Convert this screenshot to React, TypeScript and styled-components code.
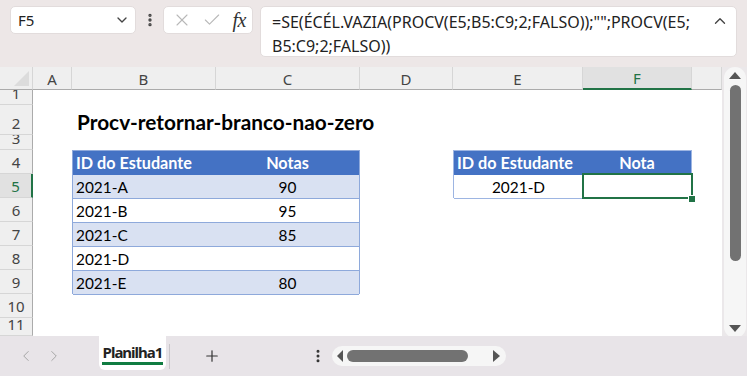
import React from "react";
import styled, { createGlobalStyle } from "styled-components";
import {
  ChevronDown,
  ChevronUp,
  ChevronLeft,
  ChevronRight,
  X,
  Check,
  EllipsisVertical,
  Plus,
} from "lucide-react";

const GREEN = "#217346";
const UI_FONT = `"Noto Sans", "Open Sans", sans-serif`;
const CELL_FONT = `Lato, "Liberation Sans", sans-serif`;

const COLS = [33, 39, 144, 144, 93, 130, 109, 30];
const ROWS = [15, 30, 15, 24, 24, 24, 24, 24, 24, 24, 18];
const COL_NAMES = ["A", "B", "C", "D", "E", "F", "G"];

const GlobalStyle = createGlobalStyle`
  html, body { margin: 0; padding: 0; }
  body { background: #ece7e8; font-family: ${UI_FONT}; }
`;

const Window = styled.div`
  width: 747px;
  height: 376px;
  display: flex;
  flex-direction: column;
  overflow: hidden;
  background: #ece7e8;
`;

const FormulaBar = styled.div`
  height: 67px;
  box-sizing: border-box;
  padding: 6px 0 0 10px;
  display: flex;
  align-items: flex-start;
  background: #ede7e7;
`;

const InputBox = styled.div<{ $w: number; $h?: number }>`
  width: ${({ $w }) => $w}px;
  height: ${({ $h }) => $h ?? 28}px;
  box-sizing: border-box;
  background: #fff;
  border: 1px solid #e2dcdc;
  border-radius: 5px;
  display: flex;
  align-items: center;
`;

const NameText = styled.span`
  flex: 1;
  padding-left: 7px;
  font-size: 15px;
  color: #222;
`;

const BarDots = styled.div`
  width: 27px;
  height: 28px;
  display: flex;
  align-items: center;
  justify-content: center;
  color: #444;
`;

const FxRow = styled.div`
  display: flex;
  align-items: center;
  justify-content: space-between;
  width: 100%;
  padding: 0 6px 0 8px;
  color: #b8b8b8;
`;

const FxLabel = styled.span`
  font-family: "Liberation Serif", serif;
  font-style: italic;
  font-size: 20px;
  color: #333;
  letter-spacing: -0.5px;
`;

const FormulaText = styled.div`
  flex: 1;
  align-self: flex-start;
  padding: 3px 0 0 11px;
  font-size: 16px;
  line-height: 24px;
  color: #222;
  white-space: nowrap;
`;

const CollapseBtn = styled.div`
  align-self: flex-start;
  padding: 5px 7px 0 0;
  color: #444;
`;

const SheetArea = styled.div`
  height: 269px;
  display: flex;
`;

const Grid = styled.div`
  position: relative;
  width: 722px;
  display: grid;
  grid-template-columns: ${COLS.map((c) => `${c}px`).join(" ")};
  grid-template-rows: 23px ${ROWS.map((r) => `${r}px`).join(" ")};
  background: #fff;
  overflow: hidden;
`;

const Corner = styled.div`
  grid-column: 1;
  grid-row: 1;
  position: relative;
  background: #efefef;
  border-right: 1px solid #d6d6d6;
  border-bottom: 1px solid #ababab;
  &::after {
    content: "";
    position: absolute;
    right: 3px;
    bottom: 3px;
    width: 15px;
    height: 15px;
    background: #dcdcdc;
    clip-path: polygon(100% 0, 100% 100%, 0 100%);
  }
`;

const ColHead = styled.div<{ $col: number; $active?: boolean }>`
  grid-column: ${({ $col }) => $col};
  grid-row: 1;
  box-sizing: border-box;
  background: ${({ $active }) => ($active ? "#e1e1e1" : "#efefef")};
  border-right: 1px solid #d6d6d6;
  border-bottom: ${({ $active }) =>
    $active ? `2px solid ${GREEN}` : "1px solid #ababab"};
  color: ${({ $active }) => ($active ? GREEN : "#444")};
  font-size: 15px;
  display: flex;
  align-items: center;
  justify-content: center;
  padding-top: 1px;
`;

const RowHead = styled.div<{ $row: number; $active?: boolean }>`
  grid-column: 1;
  grid-row: ${({ $row }) => $row};
  box-sizing: border-box;
  overflow: hidden;
  background: ${({ $active }) => ($active ? "#e1e1e1" : "#efefef")};
  border-right: ${({ $active }) =>
    $active ? `2px solid ${GREEN}` : "1px solid #ababab"};
  border-bottom: 1px solid #d6d6d6;
  color: ${({ $active }) => ($active ? GREEN : "#444")};
  font-size: 15px;
  line-height: 20px;
  display: flex;
  align-items: flex-end;
  justify-content: center;
  padding-bottom: 1px;
`;

const Title = styled.div`
  grid-column: 3 / 7;
  grid-row: 3;
  align-self: center;
  padding: 3px 0 0 5px;
  font-family: ${CELL_FONT};
  font-weight: 700;
  font-size: 20.8px;
  color: #000;
`;

const Table = styled.div<{ $col: string; $row: string; $line: string; $first: number }>`
  grid-column: ${({ $col }) => $col};
  grid-row: ${({ $row }) => $row};
  display: grid;
  grid-template-columns: ${({ $first }) => $first}px 1fr;
  grid-auto-rows: 24px;
  box-sizing: border-box;
  border: 1px solid ${({ $line }) => $line};
  border-bottom: none;
`;

const TableCell = styled.div<{
  $head?: boolean;
  $band?: boolean;
  $align?: "left" | "center";
  $line: string;
}>`
  box-sizing: border-box;
  padding: 0 3px;
  display: flex;
  align-items: center;
  justify-content: ${({ $align }) =>
    $align === "center" ? "center" : "flex-start"};
  font-family: ${CELL_FONT};
  font-size: ${({ $head }) => ($head ? "16.2px" : "15.4px")};
  font-weight: ${({ $head }) => ($head ? 700 : 400)};
  color: ${({ $head }) => ($head ? "#fff" : "#000")};
  background: ${({ $head, $band }) =>
    $head ? "#4472c4" : $band ? "#d9e1f2" : "#fff"};
  border-bottom: 1px solid
    ${({ $head, $line }) => ($head ? "#4472c4" : $line)};
`;

const Selection = styled.div`
  position: absolute;
  left: 582px;
  top: 106px;
  width: 111px;
  height: 26px;
  box-sizing: border-box;
  border: 2px solid ${GREEN};
  pointer-events: none;
  &::after {
    content: "";
    position: absolute;
    right: -5px;
    bottom: -6px;
    width: 6px;
    height: 6px;
    background: ${GREEN};
    border: 1px solid #fff;
  }
`;

const VScrollColumn = styled.div`
  width: 25px;
  padding-left: 2px;
  box-sizing: border-box;
  background: #ebe8ea;
`;

const ScrollPill = styled.div<{ $horizontal?: boolean }>`
  background: #f6f6f6;
  border-radius: 11px;
  display: flex;
  flex-direction: ${({ $horizontal }) => ($horizontal ? "row" : "column")};
  align-items: center;
  box-sizing: border-box;
  ${({ $horizontal }) =>
    $horizontal
      ? "width: 174px; height: 20px; padding: 0 6px 0 5px; gap: 4px;"
      : "width: 22px; height: 271px; padding: 5px 0 6px;"}
`;

const Arrow = styled.div<{ $dir: "up" | "down" | "left" | "right" }>`
  width: 0;
  height: 0;
  flex: none;
  ${({ $dir }) =>
    $dir === "up"
      ? "border-left: 6px solid transparent; border-right: 6px solid transparent; border-bottom: 7px solid #555;"
      : $dir === "down"
      ? "border-left: 6px solid transparent; border-right: 6px solid transparent; border-top: 7px solid #555;"
      : $dir === "left"
      ? "border-top: 6px solid transparent; border-bottom: 6px solid transparent; border-right: 6px solid #555;"
      : "border-top: 6px solid transparent; border-bottom: 6px solid transparent; border-left: 7px solid #555;"}
`;

const Thumb = styled.div<{ $horizontal?: boolean }>`
  background: #727272;
  border-radius: 6px;
  ${({ $horizontal }) =>
    $horizontal
      ? "width: 121px; height: 12px;"
      : "width: 11px; height: 176px; margin-top: 6px;"}
`;

const Spacer = styled.div`
  flex: 1;
`;

const TabBar = styled.div`
  height: 40px;
  display: flex;
  align-items: center;
  background: #e8e4e8;
`;

const NavGroup = styled.div`
  width: 99px;
  box-sizing: border-box;
  padding-left: 17px;
  display: flex;
  gap: 10px;
  color: #a4a4a4;
`;

const SheetTab = styled.div`
  align-self: flex-start;
  width: 67px;
  height: 34px;
  box-sizing: border-box;
  background: #fff;
  border-radius: 0 0 6px 6px;
  display: flex;
  flex-direction: column;
  align-items: center;
  padding-top: 6px;
`;

const TabLabel = styled.span`
  font-size: 15px;
  font-weight: 700;
  color: #222;
  line-height: 20px;
  letter-spacing: -1px;
  border-bottom: 3px solid #107c41;
  padding: 0 1px;
`;

const TabSeparator = styled.div`
  width: 1px;
  height: 25px;
  margin-left: 3px;
  background: #c9c6ca;
`;

const IconSlot = styled.div<{ $ml: number }>`
  margin-left: ${({ $ml }) => $ml}px;
  display: flex;
  color: #333;
`;

const leftRows = [
  { id: "2021-A", nota: "90" },
  { id: "2021-B", nota: "95" },
  { id: "2021-C", nota: "85" },
  { id: "2021-D", nota: "" },
  { id: "2021-E", nota: "80" },
];

export default function App() {
  const LEFT_LINE = "#8ea9db";
  const RIGHT_LINE = "#9db5e2";
  return (
    <>
      <GlobalStyle />
      <Window>
        <FormulaBar>
          <InputBox $w={126}>
            <NameText>F5</NameText>
            <ChevronDown size={16} color="#444" style={{ marginRight: 5 }} />
          </InputBox>
          <BarDots>
            <EllipsisVertical size={16} strokeWidth={3} />
          </BarDots>
          <InputBox $w={90}>
            <FxRow>
              <X size={20} strokeWidth={1.3} />
              <Check size={20} strokeWidth={1.3} />
              <FxLabel>fx</FxLabel>
            </FxRow>
          </InputBox>
          <InputBox $w={477} $h={51} style={{ marginLeft: 7 }}>
            <FormulaText>
              =SE(ÉCÉL.VAZIA(PROCV(E5;B5:C9;2;FALSO));"";PROCV(E5;
              <br />
              B5:C9;2;FALSO))
            </FormulaText>
            <CollapseBtn>
              <ChevronUp size={18} strokeWidth={1.8} />
            </CollapseBtn>
          </InputBox>
        </FormulaBar>

        <SheetArea>
          <Grid>
            <Corner />
            {COL_NAMES.map((name, i) => (
              <ColHead key={name} $col={i + 2} $active={name === "F"}>
                {name === "G" ? "" : name}
              </ColHead>
            ))}
            {ROWS.map((_, i) => (
              <RowHead key={i} $row={i + 2} $active={i + 1 === 5}>
                {i + 1}
              </RowHead>
            ))}

            <Title>Procv-retornar-branco-nao-zero</Title>

            <Table $col="3 / 5" $row="5 / 11" $line={LEFT_LINE} $first={143}>
              <TableCell $head $line={LEFT_LINE}>
                ID do Estudante
              </TableCell>
              <TableCell $head $align="center" $line={LEFT_LINE}>
                Notas
              </TableCell>
              {leftRows.map((r, i) => (
                <React.Fragment key={r.id}>
                  <TableCell $band={i % 2 === 0} $line={LEFT_LINE}>
                    {r.id}
                  </TableCell>
                  <TableCell $band={i % 2 === 0} $align="center" $line={LEFT_LINE}>
                    {r.nota}
                  </TableCell>
                </React.Fragment>
              ))}
            </Table>

            <Table $col="6 / 8" $row="5 / 7" $line={RIGHT_LINE} $first={129}>
              <TableCell $head $line={RIGHT_LINE}>
                ID do Estudante
              </TableCell>
              <TableCell $head $align="center" $line={RIGHT_LINE}>
                Nota
              </TableCell>
              <TableCell $align="center" $line={RIGHT_LINE}>
                2021-D
              </TableCell>
              <TableCell $line={RIGHT_LINE} />
            </Table>

            <Selection />
          </Grid>

          <VScrollColumn>
            <ScrollPill>
              <Arrow $dir="up" />
              <Thumb />
              <Spacer />
              <Arrow $dir="down" />
            </ScrollPill>
          </VScrollColumn>
        </SheetArea>

        <TabBar>
          <NavGroup>
            <ChevronLeft size={18} strokeWidth={1.3} />
            <ChevronRight size={18} strokeWidth={1.3} />
          </NavGroup>
          <SheetTab>
            <TabLabel>Planilha1</TabLabel>
          </SheetTab>
          <TabSeparator />
          <IconSlot $ml={33}>
            <Plus size={18} strokeWidth={1.6} />
          </IconSlot>
          <IconSlot $ml={89}>
            <EllipsisVertical size={16} strokeWidth={2.5} />
          </IconSlot>
          <IconSlot $ml={6}>
            <ScrollPill $horizontal>
              <Arrow $dir="left" />
              <Thumb $horizontal />
              <Spacer />
              <Arrow $dir="right" />
            </ScrollPill>
          </IconSlot>
        </TabBar>
      </Window>
    </>
  );
}
